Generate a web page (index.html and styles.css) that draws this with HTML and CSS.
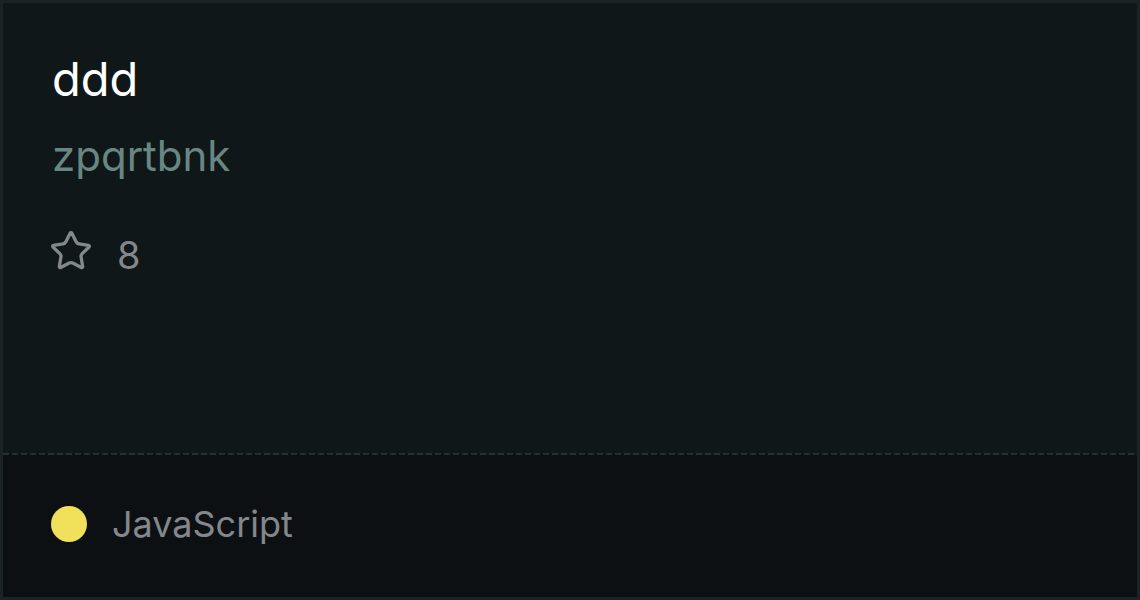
FILE: index.html
```html
<!DOCTYPE html>
<html lang="en">
<head>
    <meta charset="UTF-8">
    <title>ddd</title>
    <link rel="stylesheet" href="styles.css">
</head>
<body>
    <div class="card">
        <div class="card-body">
            <h2 class="repo-name">ddd</h2>
            <div class="repo-owner">zpqrtbnk</div>
            <div class="repo-stars">
                <svg class="star" viewBox="0 0 24 24" width="44" height="44">
                    <path d="M11.525 2.295a.53.53 0 0 1 .95 0l2.31 4.679a2.123 2.123 0 0 0 1.595 1.16l5.166.756a.53.53 0 0 1 .294.904l-3.736 3.638a2.123 2.123 0 0 0-.611 1.878l.882 5.14a.53.53 0 0 1-.771.56l-4.618-2.428a2.122 2.122 0 0 0-1.973 0L6.396 21.01a.53.53 0 0 1-.77-.56l.881-5.139a2.122 2.122 0 0 0-.611-1.879L2.16 9.795a.53.53 0 0 1 .294-.906l5.165-.755a2.122 2.122 0 0 0 1.597-1.16z" fill="none" stroke="currentColor" stroke-width="1.8" stroke-linejoin="round"/>
                </svg>
                <span class="star-count">8</span>
            </div>
        </div>
        <div class="divider"></div>
        <div class="card-footer">
            <span class="lang-dot"></span>
            <span class="lang-name">JavaScript</span>
        </div>
    </div>
</body>
</html>
```

FILE: styles.css
```css
* { box-sizing: border-box; }
html, body {
    margin: 0;
    height: 100%;
}
body {
    font-family: Inter, 'Noto Sans', sans-serif;
    background: #0c1013;
}
.card {
    height: 600px;
    border: 3px solid #1c2326;
    display: flex;
    flex-direction: column;
    background: #101719;
}
.card-body {
    height: 450px;
    padding: 48px 49px 0;
}
.repo-name {
    margin: 0;
    font-size: 47px;
    font-weight: 400;
    color: #ffffff;
    line-height: 56px;
}
.repo-owner {
    margin-top: 25px;
    font-size: 42px;
    color: #698782;
    line-height: 48px;
}
.repo-stars {
    margin-top: 53px;
    display: flex;
    align-items: flex-start;
    gap: 24px;
    color: #84888c;
    font-size: 38px;
    line-height: 44px;
}
.star {
    display: block;
    margin: -4px 0 0 -3px;
}
.divider {
    height: 2px;
    background: repeating-linear-gradient(to right, #283034 0 6px, transparent 6px 9px);
}
.card-footer {
    flex: 1;
    background: #0c1013;
    display: flex;
    align-items: center;
    padding: 0 48px 5px;
    gap: 25px;
    color: #84888c;
    font-size: 36px;
}
.lang-dot {
    width: 36px;
    height: 36px;
    border-radius: 50%;
    background: #f1e05a;
}
```
